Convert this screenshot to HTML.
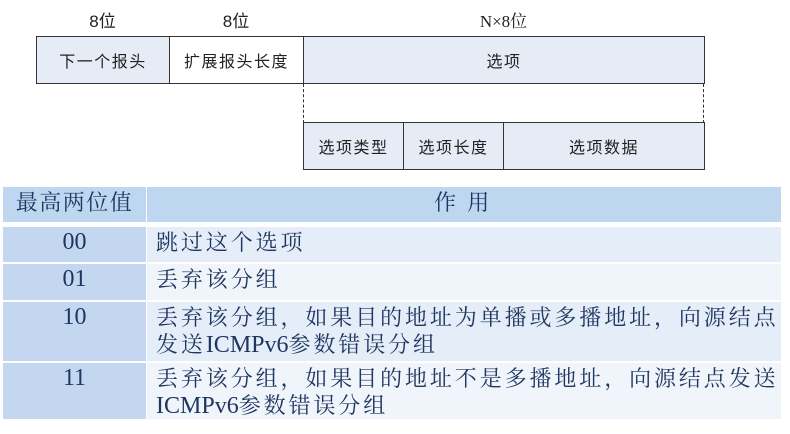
<!DOCTYPE html>
<html><head><meta charset="utf-8"><style>
body{margin:0;width:790px;height:434px;background:#fff;position:relative;overflow:hidden;font-family:"Liberation Sans","Noto Sans CJK SC",sans-serif}
.a{position:absolute;box-sizing:border-box}
.box{border:1px solid #333;display:flex;align-items:center;justify-content:center;font-size:16px;letter-spacing:1.5px;color:#222;background:#e6ecf6}
.lbl{font-size:17px;color:#222;text-align:center}
.t{position:absolute;box-sizing:border-box;font-family:"Liberation Serif","Noto Serif CJK SC",serif;font-size:22px;color:#1f3660;line-height:27px;letter-spacing:2.9px}
.c1{background:#c3d8f0;text-align:center;letter-spacing:0;font-size:24px}
.l{letter-spacing:0;font-size:24px}
</style></head><body>
<div class="a lbl" style="left:36px;top:7px;width:133px">8位</div>
<div class="a lbl" style="left:169px;top:7px;width:134px">8位</div>
<div class="a lbl" style="left:303px;top:7px;width:401px;font-family:'Liberation Serif','Noto Serif CJK SC',serif">N×8位</div>
<div class="a box" style="left:36px;top:36px;width:134px;height:48px">下一个报头</div>
<div class="a box" style="left:169px;top:36px;width:135px;height:48px;background:#fff">扩展报头长度</div>
<div class="a box" style="left:303px;top:36px;width:402px;height:48px">选项</div>
<div class="a" style="left:303px;top:84px;height:39px;border-left:1px dashed #333"></div>
<div class="a" style="left:703px;top:84px;height:39px;border-left:1px dashed #333"></div>
<div class="a box" style="left:303px;top:122px;width:101px;height:48px">选项类型</div>
<div class="a box" style="left:403px;top:122px;width:101px;height:48px">选项长度</div>
<div class="a box" style="left:503px;top:122px;width:202px;height:48px">选项数据</div>

<div class="t c1" style="left:3px;top:187px;width:143px;height:35px;background:#bfd6f0;padding-top:2px;letter-spacing:1.5px;font-size:22px">最高两位值</div>
<div class="t" style="left:147px;top:187px;width:634px;height:35px;background:#bfd6f0;padding-top:2px;padding-left:287px">作 用</div>

<div class="t c1" style="left:3px;top:227px;width:143px;height:35px;padding-top:2px">00</div>
<div class="t" style="left:147px;top:227px;width:634px;height:35px;background:#e4edf8;padding:2px 0 0 9px">跳过这个选项</div>

<div class="t c1" style="left:3px;top:264px;width:143px;height:36px;padding-top:2px">01</div>
<div class="t" style="left:147px;top:264px;width:634px;height:36px;background:#f0f5fb;padding:2px 0 0 9px">丢弃该分组</div>

<div class="t c1" style="left:3px;top:302px;width:143px;height:59px;padding-top:2px">10</div>
<div class="t" style="left:147px;top:302px;width:634px;height:59px;background:#e4edf8;padding:2px 0 0 9px;white-space:nowrap">丢弃该分组，如果目的地址为单播或多播地址，向源结点<br>发送<span class="l">ICMPv6</span>参数错误分组</div>

<div class="t c1" style="left:3px;top:363px;width:143px;height:56px;padding-top:2px">11</div>
<div class="t" style="left:147px;top:363px;width:634px;height:56px;background:#f0f5fb;padding:2px 0 0 9px;white-space:nowrap">丢弃该分组，如果目的地址不是多播地址，向源结点发送<br><span class="l">ICMPv6</span>参数错误分组</div>
</body></html>
